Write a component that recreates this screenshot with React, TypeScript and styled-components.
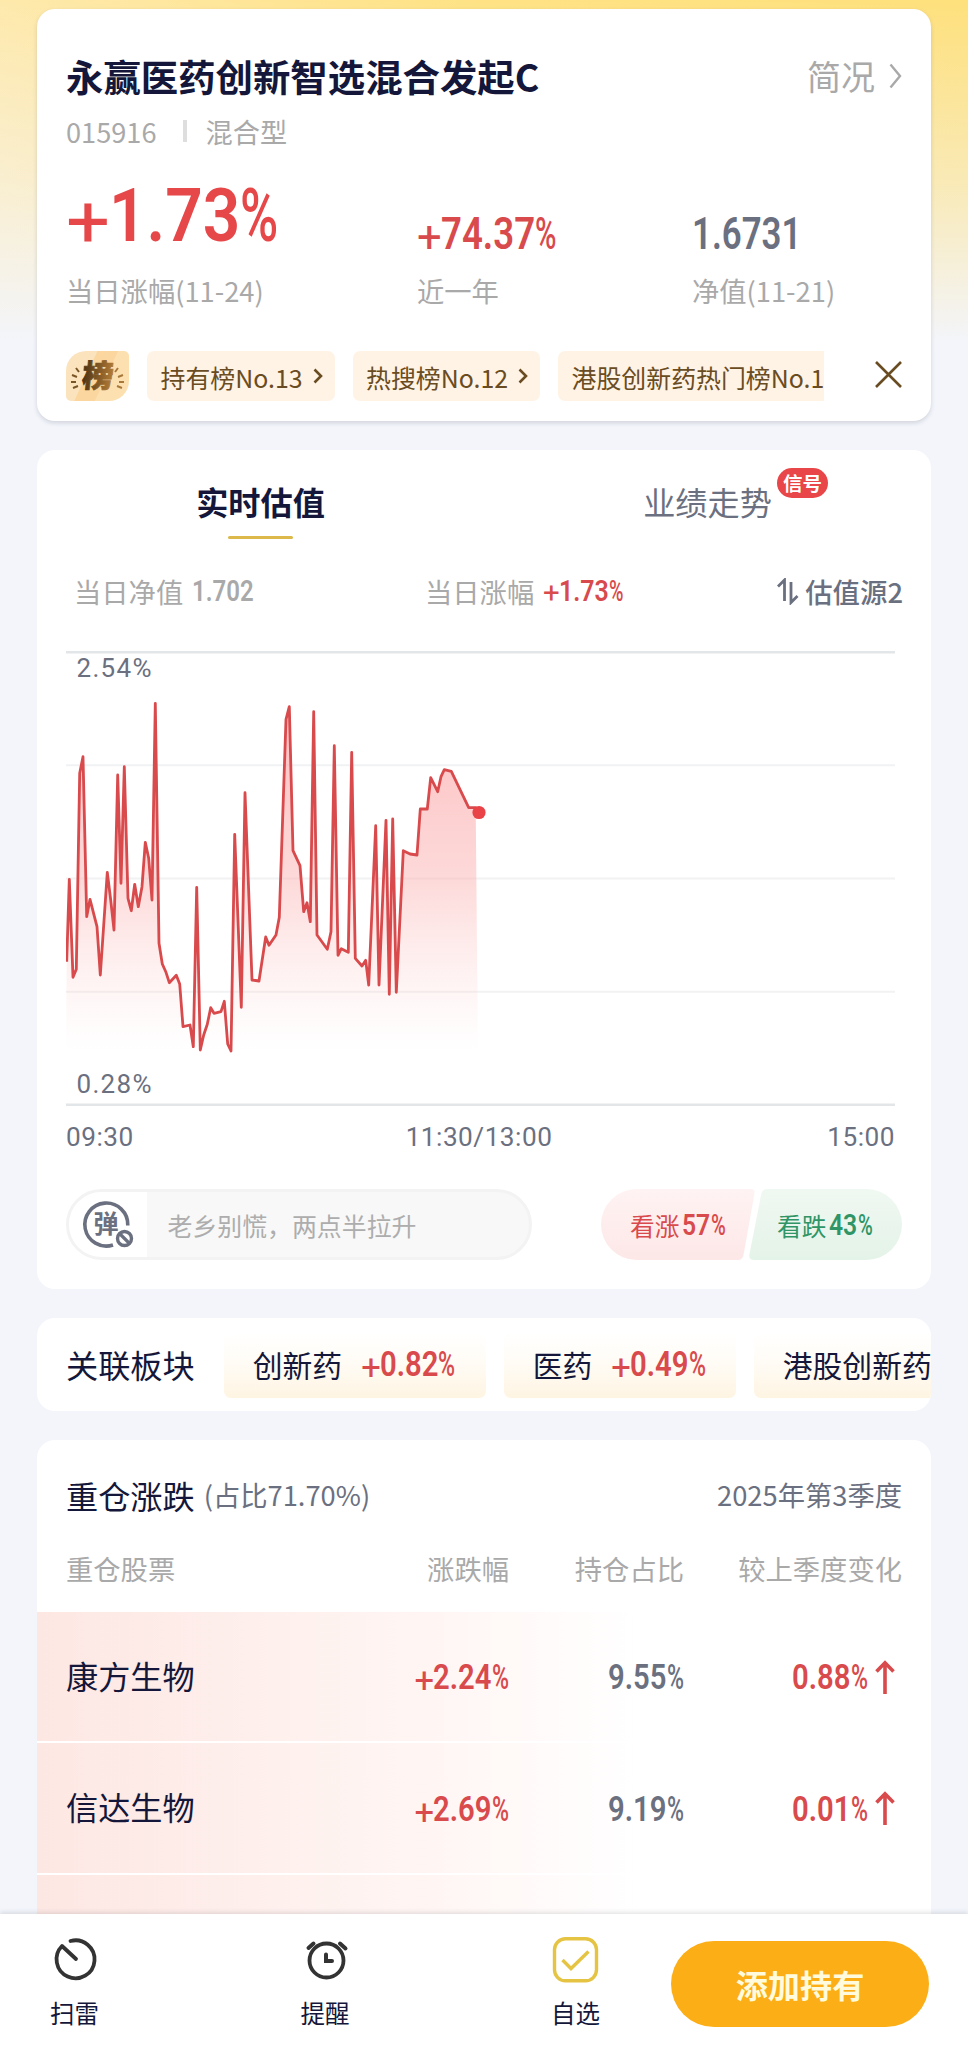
import React from 'react';
import styled, { createGlobalStyle } from 'styled-components';

const INK = '#14173a';
const SLATE = '#6b7080';
const MUTE = '#a9a9a9';
const RED = '#d84a4c';
const GREEN = '#2f9566';
const BROWN = '#6a4c22';

const GlobalStyle = createGlobalStyle`
  * { box-sizing: border-box; }
  body {
    margin: 0;
    background: #f3f5fb;
    font-family: "Noto Sans CJK SC", "Noto Sans", sans-serif;
    color: ${INK};
  }
`;

const Screen = styled.div`
  width: 968px;
  height: 2053px;
  display: flex;
  flex-direction: column;
  overflow: hidden;
  background:
    linear-gradient(180deg, rgba(243, 245, 251, 0) 0, rgba(243, 245, 251, 0.45) 180px, #f3f5fb 345px),
    linear-gradient(90deg, #fee9ac 0, #fee284 50%, #fee07c 100%);
`;

const Feed = styled.main`
  flex: 1;
  min-height: 0;
  overflow: hidden;
  padding: 9px 37px 0;
  display: flex;
  flex-direction: column;
  gap: 29px;
`;

const Card = styled.section`
  flex: none;
  background: #fff;
  border-radius: 18px;
  overflow: hidden;
`;

/* ---------- condensed numerals ---------- */

const Figure = styled.span<{ $size: number; $color: string }>`
  display: inline-flex;
  flex: none;
  font-family: Roboto, "Liberation Sans", sans-serif;
  font-size: ${p => p.$size}px;
  line-height: 1;
  color: ${p => p.$color};
  white-space: nowrap;
`;

const Glyphs = styled.span<{ $width: number; $scale: number; $weight: number; $drop?: number }>`
  width: ${p => p.$width}em;
  font-weight: ${p => p.$weight};
  transform: translateY(${p => p.$drop ?? 0}em) scaleX(${p => p.$scale});
  transform-origin: 0 50%;
`;

interface NumProps {
  value: string;
  size: number;
  color?: string;
  stretch?: number;
}

function Num({ value, size, color = RED, stretch = 1 }: NumProps) {
  const sign = value.startsWith('+');
  const pct = value.endsWith('%');
  const body = value.replace(/[+%]/g, '');
  const digits = body.replace('.', '').length;
  const dots = body.length - digits;
  const width = (digits * 0.47 + dots * 0.28) * stretch;
  const natural = digits * 0.571 + dots * 0.281;
  return (
    <Figure $size={size} $color={color}>
      {sign && <Glyphs $width={0.55 * stretch} $scale={stretch} $weight={400} $drop={0.08}>+</Glyphs>}
      <Glyphs $width={width} $scale={width / natural} $weight={650}>{body}</Glyphs>
      {pct && <Glyphs $width={0.5 * stretch} $scale={0.67 * stretch} $weight={500}>%</Glyphs>}
    </Figure>
  );
}

/* ---------- fund summary ---------- */

const SummaryCard = styled(Card)`
  height: 412px;
  padding: 42px 29px 0;
  box-shadow: 0 2px 4px rgba(90, 95, 110, 0.22);
`;

const TitleRow = styled.header`
  display: flex;
  justify-content: space-between;
  align-items: center;
  height: 50px;
`;

const Title = styled.h1`
  margin: 0;
  font-size: 37.4px;
  line-height: 50px;
  font-weight: 700;
`;

const Brief = styled.a`
  display: flex;
  align-items: center;
  gap: 14px;
  font-size: 34px;
  line-height: 50px;
  color: ${MUTE};
`;

const Meta = styled.div`
  margin-top: 12px;
  display: flex;
  align-items: center;
  font-size: 27.2px;
  line-height: 36px;
  color: ${MUTE};
`;

const Divider = styled.i`
  width: 4px;
  height: 22px;
  margin: 0 19px 0 26px;
  background: #dedede;
`;

const Stats = styled.div`
  margin-top: 29px;
  display: grid;
  grid-template-columns: 351px 275px 1fr;
  align-items: end;
`;

const Stat = styled.div<{ $gap: number }>`
  display: flex;
  flex-direction: column;
  gap: ${p => p.$gap}px;
`;

const Label = styled.span`
  font-size: 27.3px;
  line-height: 36px;
  color: ${MUTE};
  white-space: nowrap;
`;

const Ranks = styled.div`
  margin-top: 43px;
  display: flex;
  align-items: center;
  justify-content: space-between;
  height: 50px;
`;

const RankList = styled.div`
  width: 758px;
  display: flex;
  gap: 18px;
  overflow: hidden;
`;

const RankBadge = styled.div`
  flex: none;
  width: 63px;
  height: 50px;
  border-radius: 20px 5px 20px 5px;
  overflow: hidden;
  background: linear-gradient(115deg, #fbe3bd 0 36%, #fbd79f 37% 60%, #fde0b0 61%);
`;

const RankChip = styled.div`
  flex: none;
  height: 50px;
  display: flex;
  align-items: center;
  gap: 10px;
  padding: 0 12px 0 13.5px;
  border-radius: 7px;
  background: #fff3e6;
  color: ${BROWN};
  font-size: 24.9px;
  line-height: 50px;
  white-space: nowrap;
`;

const RankName = styled.span`
  padding-top: 1px;
`;

const CloseIcon = styled.svg`
  width: 27px;
  height: 27px;
  margin-bottom: 3px;
`;

const Chevron = ({ w, h, color, stroke }: { w: number; h: number; color: string; stroke: number }) => (
  <svg width={w} height={h} viewBox={`0 0 ${w} ${h}`} fill="none" stroke={color} strokeWidth={stroke}>
    <path d={`M1.5 1.5 L${w - 2} ${h / 2} L1.5 ${h - 1.5}`} />
  </svg>
);

/* ---------- valuation ---------- */

const ValuationCard = styled(Card)`
  height: 839px;
`;

const Tabs = styled.nav`
  display: grid;
  grid-template-columns: 1fr 1fr;
  padding-top: 26px;
`;

const Tab = styled.div<{ $active?: boolean }>`
  display: flex;
  flex-direction: column;
  align-items: center;
  gap: 10px;
  font-size: 32.2px;
  line-height: 50px;
  font-weight: ${p => (p.$active ? 700 : 400)};
  color: ${p => (p.$active ? INK : SLATE)};

  &::after {
    content: '';
    width: 65px;
    height: 3px;
    border-radius: 2px;
    background: ${p => (p.$active ? '#dcb94a' : 'transparent')};
  }
`;

const TabName = styled.span`
  position: relative;
`;

const SignalBadge = styled.b`
  position: absolute;
  left: 134px;
  top: -8px;
  width: 51px;
  height: 30px;
  border-radius: 15px;
  background: #e84648;
  color: #fff;
  font-size: 19.5px;
  line-height: 29px;
  text-align: center;
`;

const Readout = styled.div`
  height: 40px;
  margin-top: 32px;
  padding: 0 28px 0 37px;
  display: grid;
  grid-template-columns: 351px 1fr auto;
  align-items: center;
`;

const Reading = styled.div`
  display: flex;
  align-items: center;
  gap: 9px;

  ${Figure} { margin-bottom: 1px; }
`;

const Source = styled.div`
  display: flex;
  align-items: center;
  gap: 6px;
  font-size: 27.4px;
  line-height: 36px;
  font-weight: 500;
  color: ${SLATE};
`;

const ChartBox = styled.div`
  margin: 40px 35px 0 29px;

  svg { display: block; }
  text {
    font-family: Roboto, sans-serif;
    font-size: 26px;
    letter-spacing: 1.3px;
    fill: ${SLATE};
  }
`;

const TimeAxis = styled.div`
  margin-top: 12px;
  margin-right: 1px;
  display: flex;
  justify-content: space-between;
  font-family: Roboto, sans-serif;
  font-size: 26.2px;
  line-height: 36px;
  letter-spacing: 0.5px;
  color: ${SLATE};

  > :nth-child(2) { margin-right: 3px; }
`;

const TalkRow = styled.div`
  margin: 34px 29px 0;
  display: flex;
  justify-content: space-between;
`;

const Comment = styled.div`
  width: 466px;
  height: 71px;
  display: flex;
  border: 3px solid #f3f3f3;
  border-radius: 36px;
  overflow: hidden;
  background: #f8f8f8;
  color: #adadad;
  font-size: 24.9px;
  line-height: 66px;
`;

const CommentToggle = styled.div`
  width: 78px;
  margin-right: 20.5px;
  background: #fff;
`;

const Vote = styled.div`
  display: flex;
  height: 71px;
`;

const UP_SHAPE =
  'M35.5 0 H149 Q154.5 0 153.4 5 L142.5 66 Q141.5 71 136.5 71 H35.5 A35.5 35.5 0 0 1 35.5 0 Z';
const DOWN_SHAPE =
  'M117.5 0 H18 Q13.3 0 12.3 5 L0.5 65 Q-0.5 71 5 71 H117.5 A35.5 35.5 0 0 0 117.5 0 Z';

const Side = styled.div<{ $up?: boolean }>`
  width: ${p => (p.$up ? 154 : 153)}px;
  margin-left: ${p => (p.$up ? 0 : -6)}px;
  padding-left: ${p => (p.$up ? 29 : 28)}px;
  display: flex;
  align-items: center;
  gap: 3px;
  font-size: 24.7px;
  line-height: 36px;
  color: ${p => (p.$up ? RED : GREEN)};
  background: linear-gradient(${p => (p.$up ? '#fff3f3, #fde7e7' : '#f0f8f2, #e4f3e8')});
  clip-path: path('${p => (p.$up ? UP_SHAPE : DOWN_SHAPE)}');
`;

/* ---------- sectors ---------- */

const SectorCard = styled(Card)`
  height: 93px;
  padding-left: 29px;
  display: flex;
  align-items: flex-end;
  font-size: 32.2px;
  line-height: 93px;
  white-space: nowrap;
`;

const SectorList = styled.div`
  flex: 1;
  min-width: 0;
  margin: 0 0 13px 29px;
  display: flex;
  gap: 18px;
  overflow: hidden;
`;

const Sector = styled.div`
  flex: none;
  height: 66px;
  padding: 0 30px 2px 29px;
  display: flex;
  align-items: center;
  gap: 19px;
  border-radius: 7px;
  background: linear-gradient(#ffffff, #fffcf6 45%, #fef4e2);
  font-size: 29.8px;
  line-height: 60px;
`;

/* ---------- holdings ---------- */

const HoldingsCard = styled(Card)`
  height: 700px;
  padding-top: 28px;
`;

const HoldingsHead = styled.div`
  padding: 0 29px;
  display: flex;
  align-items: center;
  font-size: 27.3px;
  line-height: 50px;
  color: ${SLATE};
`;

const HoldingsTitle = styled.h2`
  margin: 2px 9px 0 0;
  font-size: 32.2px;
  line-height: 50px;
  font-weight: 400;
  color: ${INK};
`;

const Quarter = styled.span`
  margin-left: auto;
`;

const Row = styled.div`
  display: grid;
  grid-template-columns: 268px 175px 175px 218px;
  align-items: center;
  padding: 0 29px;

  > :not(:first-child) { justify-self: end; }
`;

const HeaderRow = styled(Row)`
  margin-top: 28px;
  height: 64px;
  padding-bottom: 24px;
`;

const StockRow = styled(Row)`
  height: 131.3px;
  padding-top: 2px;
  border-bottom: 2.5px solid #fff;
  background: linear-gradient(90deg, #fde7e3 0, #fef0ed 240px, #fff7f5 420px, #fff 600px);
`;

const StockName = styled.span`
  font-size: 32.2px;
  line-height: 50px;
  padding-bottom: 5px;
`;

const Change = styled.div`
  display: flex;
  align-items: center;
  gap: 7px;
  padding-right: 7px;
`;

const UpArrow = () => (
  <svg width="20" height="35" viewBox="0 0 20 35" fill="none" stroke={RED} strokeWidth="3.6">
    <path d="M10 34V3M1.5 11.5L10 2.8L18.5 11.5" />
  </svg>
);

/* ---------- bottom bar ---------- */

const BottomBar = styled.footer`
  flex: none;
  height: 139px;
  padding: 0 39px 0 0;
  display: grid;
  grid-template-columns: 149px 352px 149px 1fr;
  background: #fff;
  box-shadow: 0 -1px 5px rgba(60, 60, 70, 0.18);
  position: relative;
`;

const Action = styled.div`
  justify-self: center;
  padding-top: 20px;
  display: flex;
  flex-direction: column;
  align-items: center;
  gap: 8.5px;
  font-size: 24.5px;
  line-height: 40px;

  svg { width: 50px; height: 50px; }
`;

const AddButton = styled.button`
  margin: 27px 0 0 21px;
  height: 86px;
  border: 0;
  border-radius: 43px;
  background: #fcae17;
  color: #fffbdc;
  font: 700 32.2px/86px "Noto Sans CJK SC", sans-serif;
  padding: 0;
`;

/* Minute-by-minute estimate, sampled on a grid three times finer than the plot. */
const SERIES: [number, number][] = [
  [50, 845], [58, 598], [69, 892], [79, 868], [89, 280], [99, 230], [110, 710], [120, 658],
  [141, 740], [151, 885], [172, 577], [182, 660], [192, 750], [203, 285], [213, 610], [223, 260],
  [234, 655], [244, 692], [254, 613], [265, 680], [276, 620], [286, 487], [296, 535], [306, 660],
  [316, 70], [327, 790], [337, 852], [348, 877], [358, 908], [379, 886], [389, 912], [399, 1040],
  [420, 1035], [430, 1100], [440, 622], [451, 1110], [461, 1065], [472, 1033], [482, 983],
  [492, 1000], [513, 995], [523, 964], [533, 1092], [543, 1113], [554, 463], [574, 982],
  [585, 338], [606, 900], [627, 903], [647, 771], [657, 796], [678, 765], [688, 712], [708, 118],
  [718, 80], [729, 512], [750, 557], [761, 695], [771, 668], [781, 725], [791, 95], [801, 765],
  [832, 808], [843, 755], [853, 197], [864, 826], [874, 806], [895, 817], [905, 217], [916, 835],
  [936, 858], [947, 841], [956, 915], [977, 437], [987, 915], [1008, 421], [1018, 943],
  [1028, 417], [1039, 937], [1060, 512], [1080, 522], [1101, 525], [1111, 387], [1132, 387],
  [1142, 293], [1163, 335], [1173, 290], [1183, 269], [1204, 274], [1256, 383], [1277, 383],
];
const px = (x: number) => +(x / 3 - 16).toFixed(1);
const py = (y: number) => +(y / 3 + 29).toFixed(1);
const LINE = SERIES.map(([x, y]) => `${px(x)} ${py(y)}`).join(' L');

function Chart() {
  return (
    <svg width="829" height="456" viewBox="0 0 829 456">
      <defs>
        <linearGradient id="area" x1="0" y1="60" x2="0" y2="400" gradientUnits="userSpaceOnUse">
          <stop offset="0" stopColor="#fda4a6" stopOpacity="0.7" />
          <stop offset="0.5" stopColor="#fbb4b4" stopOpacity="0.5" />
          <stop offset="1" stopColor="#fdd4d2" stopOpacity="0" />
        </linearGradient>
      </defs>
      {[114.3, 227.5, 340.7].map(y => (
        <path key={y} d={`M0 ${y}H829`} stroke="#f1f2f3" strokeWidth="2" />
      ))}
      {[1.3, 453.7].map(y => (
        <path key={y} d={`M0 ${y}H829`} stroke="#e3e6e8" strokeWidth="2.6" />
      ))}
      <path d={`M${LINE} L412 400 L0 400Z`} fill="url(#area)" />
      <path d={`M${LINE} L412 161`} fill="none" stroke={RED} strokeWidth="2.8" strokeLinejoin="round" />
      <circle cx="413" cy="161.5" r="6.6" fill="#e94347" />
      <text x="10.5" y="25.5">2.54%</text>
      <text x="10.5" y="441.5">0.28%</text>
    </svg>
  );
}

const RANKS = ['持有榜No.13', '热搜榜No.12', '港股创新药热门榜No.1'];
const SECTORS = [
  { name: '创新药', change: '+0.82%' },
  { name: '医药', change: '+0.49%' },
  { name: '港股创新药', change: '' },
];
const STOCKS = [
  { name: '康方生物', change: '+2.24%', weight: '9.55%', delta: '0.88%' },
  { name: '信达生物', change: '+2.69%', weight: '9.19%', delta: '0.01%' },
];

export default function App() {
  return (
    <Screen>
      <GlobalStyle />
      <Feed>
        <SummaryCard>
          <TitleRow>
            <Title>永赢医药创新智选混合发起C</Title>
            <Brief>
              简况
              <Chevron w={13} h={26} color={MUTE} stroke={2.4} />
            </Brief>
          </TitleRow>
          <Meta>
            015916
            <Divider />
            混合型
          </Meta>
          <Stats>
            <Stat $gap={19}>
              <Num value="+1.73%" size={75} color="#e6484a" stretch={1.035} />
              <Label>当日涨幅(11-24)</Label>
            </Stat>
            <Stat $gap={16}>
              <Num value="+74.37%" size={43.5} />
              <Label>近一年</Label>
            </Stat>
            <Stat $gap={16}>
              <Num value="1.6731" size={43.5} color={SLATE} stretch={0.955} />
              <Label>净值(11-21)</Label>
            </Stat>
          </Stats>
          <Ranks>
            <RankList>
              <RankBadge>
                <svg width="63" height="50" viewBox="0 0 63 50">
                  <defs>
                    <linearGradient id="gold" x1="0" x2="1">
                      <stop offset="0" stopColor="#4c3213" />
                      <stop offset="1" stopColor="#b47c36" />
                    </linearGradient>
                  </defs>
                  <g fill="none" stroke="#7a5526" strokeWidth="2">
                    <path d="M10 17l3 4M6 24l5 2M5 31l5 0M7 37l5-2" />
                    <path d="M52 17l-3 4M57 24l-5 2M58 31l-5 0M56 37l-5-2" stroke="#a8793c" />
                  </g>
                  <text x="16" y="36.5" fontSize="31" fontWeight="900" fill="url(#gold)" stroke="url(#gold)" strokeWidth="0.8" transform="skewX(-6) translate(3 0)">榜</text>
                </svg>
              </RankBadge>
              {RANKS.map(rank => (
                <RankChip key={rank}>
                  <RankName>{rank}</RankName>
                  <Chevron w={10} h={16} color={BROWN} stroke={2.6} />
                </RankChip>
              ))}
            </RankList>
            <CloseIcon viewBox="0 0 27 27" stroke={BROWN} strokeWidth="2.6">
              <path d="M1 1L26 26M26 1L1 26" />
            </CloseIcon>
          </Ranks>
        </SummaryCard>

        <ValuationCard>
          <Tabs>
            <Tab $active><TabName>实时估值</TabName></Tab>
            <Tab>
              <TabName>业绩走势<SignalBadge>信号</SignalBadge></TabName>
            </Tab>
          </Tabs>
          <Readout>
            <Reading>
              <Label>当日净值</Label>
              <Num value="1.702" size={30} color={MUTE} stretch={0.95} />
            </Reading>
            <Reading>
              <Label>当日涨幅</Label>
              <Num value="+1.73%" size={30} stretch={0.98} />
            </Reading>
            <Source>
              <svg width="22" height="27" viewBox="0 0 22 27" fill="none" stroke={SLATE} strokeWidth="2.8">
                <path d="M1 8.5L7.5 2V23M14 4V24.5L20.5 18" />
              </svg>
              估值源2
            </Source>
          </Readout>
          <ChartBox>
            <Chart />
            <TimeAxis>
              <span>09:30</span>
              <span>11:30/13:00</span>
              <span>15:00</span>
            </TimeAxis>
          </ChartBox>
          <TalkRow>
            <Comment>
              <CommentToggle>
                <svg width="78" height="65" viewBox="0 0 78 65" fill="none" stroke={SLATE}>
                  <path d="M58.8 33.5A21.5 21.5 0 1 0 44 53" strokeWidth="3.6" />
                  <circle cx="55.5" cy="46.5" r="7" strokeWidth="3.4" />
                  <path d="M50.5 41.5L60.5 51.5" strokeWidth="3.2" />
                  <text x="24.5" y="40.5" fontSize="25" fontWeight="700" fill={SLATE} stroke="none">弹</text>
                </svg>
              </CommentToggle>
              老乡别慌，两点半拉升
            </Comment>
            <Vote>
              <Side $up>看涨<Num value="57%" size={30} /></Side>
              <Side>看跌<Num value="43%" size={30} color={GREEN} /></Side>
            </Vote>
          </TalkRow>
        </ValuationCard>

        <SectorCard>
          关联板块
          <SectorList>
            {SECTORS.map(s => (
              <Sector key={s.name}>
                {s.name}
                {s.change && <Num value={s.change} size={34.5} />}
              </Sector>
            ))}
          </SectorList>
        </SectorCard>

        <HoldingsCard>
          <HoldingsHead>
            <HoldingsTitle>重仓涨跌</HoldingsTitle>
            (占比71.70%)
            <Quarter>2025年第3季度</Quarter>
          </HoldingsHead>
          <HeaderRow>
            <Label>重仓股票</Label>
            <Label>涨跌幅</Label>
            <Label>持仓占比</Label>
            <Label>较上季度变化</Label>
          </HeaderRow>
          {STOCKS.map(s => (
            <StockRow key={s.name}>
              <StockName>{s.name}</StockName>
              <Num value={s.change} size={34.5} />
              <Num value={s.weight} size={34.5} color={SLATE} />
              <Change>
                <Num value={s.delta} size={34.5} />
                <UpArrow />
              </Change>
            </StockRow>
          ))}
          <StockRow />
        </HoldingsCard>
      </Feed>

      <BottomBar>
        <Action>
          <svg viewBox="0 0 50 50" fill="none" stroke="#333" strokeWidth="3.8" strokeLinecap="round" strokeLinejoin="round">
            <path d="M20.5 7A19 19 0 1 1 12 12L26 25" />
          </svg>
          扫雷
        </Action>
        <Action>
          <svg viewBox="0 0 50 50" fill="none" stroke="#333" strokeWidth="3.8" strokeLinecap="round">
            <circle cx="26.5" cy="26.5" r="17" />
            <path d="M26 20.5V27H32M8.5 14L13.5 9.5M40 9.5L45.5 14.5" strokeWidth="4" />
          </svg>
          提醒
        </Action>
        <Action>
          <svg viewBox="0 0 50 50" fill="none" stroke="#e6c443" strokeWidth="3.4">
            <rect x="3.5" y="4.8" width="42" height="42" rx="11" />
            <path d="M11.5 26L20 34.5L37.5 17.5" />
          </svg>
          自选
        </Action>
        <AddButton>添加持有</AddButton>
      </BottomBar>
    </Screen>
  );
}
